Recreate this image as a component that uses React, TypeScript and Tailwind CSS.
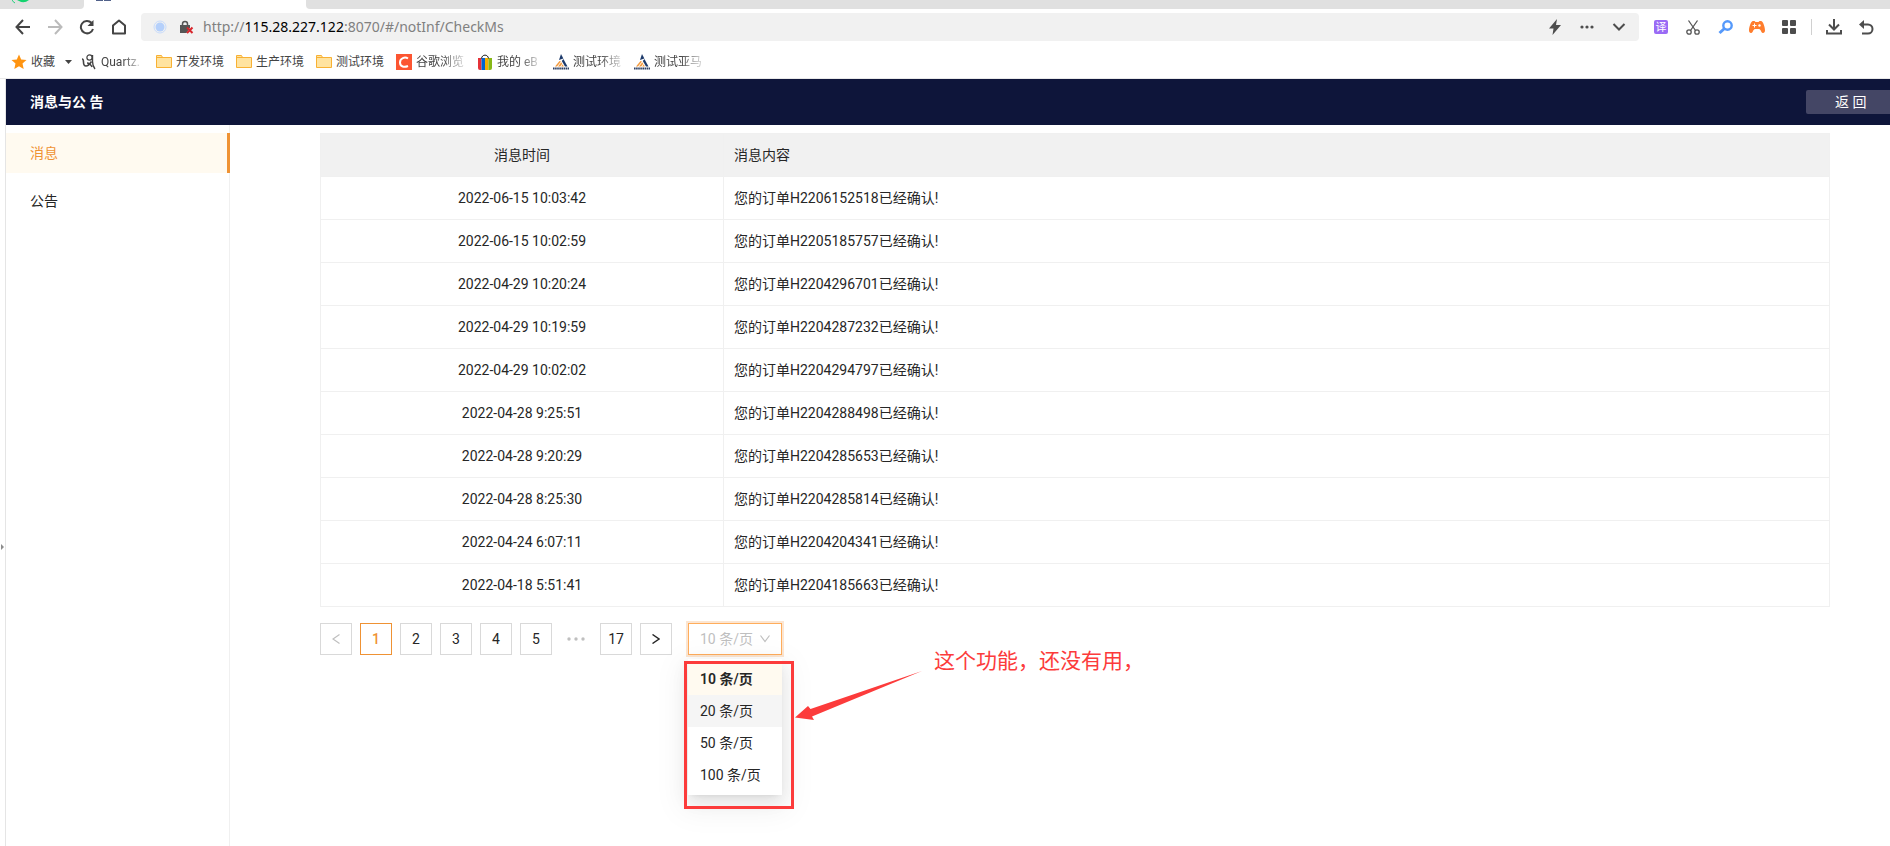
import { useState } from 'react';
import type { ReactNode } from 'react';

type Message = { time: string; order: string };

const messages: Message[] = [
    { time: '2022-06-15 10:03:42', order: 'H2206152518' },
    { time: '2022-06-15 10:02:59', order: 'H2205185757' },
    { time: '2022-04-29 10:20:24', order: 'H2204296701' },
    { time: '2022-04-29 10:19:59', order: 'H2204287232' },
    { time: '2022-04-29 10:02:02', order: 'H2204294797' },
    { time: '2022-04-28 9:25:51', order: 'H2204288498' },
    { time: '2022-04-28 9:20:29', order: 'H2204285653' },
    { time: '2022-04-28 8:25:30', order: 'H2204285814' },
    { time: '2022-04-24 6:07:11', order: 'H2204204341' },
    { time: '2022-04-18 5:51:41', order: 'H2204185663' },
];

const pageSizes = [10, 20, 50, 100];

function FolderIcon() {
    return (
        <svg width="16" height="16" viewBox="0 0 16 16" className="shrink-0">
            <path d="M.5 1.5h5l1 2h9v10H.5z" fill="#ffe3a0" stroke="#f8b133" />
            <path d="M1 3.500h14" stroke="#f8b133" />
        </svg>
    );
}

function NautIcon() {
    return (
        <svg width="16" height="16" viewBox="0 0 16 16" className="shrink-0">
            <path d="M8 0l2.400 4.400L6 6z" fill="#1d3a6b" />
            <path d="M10.400 5L14.500 12.500H12L8.800 7z" fill="#1d3a6b" />
            <path d="M6.500 7L2 12.500h2L8 7.500zM8.300 8.200L5 12.500h2.200l2-2.800zM9.700 10.200L8.200 12.500h2.600z" fill="#f39a3e" />
            <path d="M0 14.500h16" stroke="#2c3f63" strokeWidth="2" strokeDasharray="1.600 .5" />
        </svg>
    );
}

function Bookmark({ icon, label, width, fade }: { icon: ReactNode; label: string; width: string; fade?: boolean }) {
    return (
        <a href="#" className={`flex shrink-0 items-center gap-1 ${width}`}>
            {icon}
            <span className={`whitespace-nowrap ${fade ? '[mask-image:linear-gradient(to_right,black_55%,#0003)]' : ''}`}>
                {label}
            </span>
        </a>
    );
}

function ToolButton({ label, children }: { label: string; children: ReactNode }) {
    return (
        <button type="button" aria-label={label} className="flex h-7 w-8 shrink-0 items-center justify-center">
            {children}
        </button>
    );
}

function BrowserChrome() {
    return (
        <header className="bg-white">
            <div className="flex h-[9px] overflow-hidden">
                <div className="w-[84px] rounded-br bg-[#e0e0e0] pl-3">
                    <svg width="18" height="4" viewBox="0 0 18 4">
                        <path d="M0 0q1 2 3 3" fill="none" stroke="#1fd07a" />
                        <path d="M5 0h12q-5 4-10 1z" fill="#14d36f" />
                    </svg>
                </div>
                <div className="w-[222px] bg-white pl-3">
                    <svg width="18" height="2" viewBox="0 0 18 2">
                        <path d="M0 .5h16" stroke="#51618a" strokeDasharray="7 1" />
                    </svg>
                </div>
                <div className="flex-1 rounded-bl bg-[#e0e0e0]" />
            </div>

            <div className="flex h-9 items-center pl-[7px] pr-2">
                <ToolButton label="后退">
                    <svg width="16" height="16" viewBox="0 0 16 16" fill="none" stroke="#444" strokeWidth="2">
                        <path d="M15 8H2M8 1L1.5 8 8 15" />
                    </svg>
                </ToolButton>
                <ToolButton label="前进">
                    <svg width="16" height="16" viewBox="0 0 16 16" fill="none" stroke="#bbb" strokeWidth="2">
                        <path d="M1 8h13M8 1l6.500 7L8 15" />
                    </svg>
                </ToolButton>
                <ToolButton label="刷新">
                    <svg width="16" height="16" viewBox="0 0 16 16" fill="none" stroke="#444" strokeWidth="2">
                        <path d="M14 10a6.200 6.200 0 1 1-1.500-6.200" />
                        <path d="M14.500 1v6h-6z" fill="#444" stroke="none" />
                    </svg>
                </ToolButton>
                <ToolButton label="主页">
                    <svg width="16" height="16" viewBox="0 0 16 16" fill="none" stroke="#444" strokeWidth="2" strokeLinejoin="round">
                        <path d="M2 14.500V6.500L8 1.500l6 5v8z" />
                    </svg>
                </ToolButton>

                <div className="ml-[6px] flex h-7 flex-1 items-center rounded bg-[#f1f1f1] pl-3 pr-1">
                    <svg width="14" height="14" viewBox="0 0 14 14" className="shrink-0">
                        <circle cx="7" cy="7" r="6" fill="none" stroke="#c9dcfb" />
                        <circle cx="7" cy="7" r="4.500" fill="#b5d0fb" />
                    </svg>
                    <svg width="14" height="14" viewBox="0 0 14 14" className="ml-[13px] shrink-0">
                        <path d="M2.500 6V4a2.500 2.500 0 0 1 5 0v2" fill="none" stroke="#555" strokeWidth="1.500" />
                        <path d="M0 5h10v2.500L6.500 13H0z" fill="#555" />
                        <path d="M7 7.500l5.500 5.500M12.500 7.500L7 13" stroke="#d8262c" strokeWidth="2" />
                    </svg>
                    <span className="ml-[9px] flex-1 font-['Noto_Sans',sans-serif] text-sm text-[#808080]">
                        http://<span className="text-black">115.28.227.122</span>:8070/#/notInf/CheckMs
                    </span>
                    <ToolButton label="极速模式">
                        <svg width="14" height="16" viewBox="0 0 14 16">
                            <path d="M9 0L1 9.500h4.500L4.500 16 13 6H8z" fill="#4d4d4d" />
                        </svg>
                    </ToolButton>
                    <ToolButton label="更多">
                        <svg width="14" height="4" viewBox="0 0 14 4" fill="#4d4d4d">
                            <circle cx="2" cy="2" r="1.600" />
                            <circle cx="7" cy="2" r="1.600" />
                            <circle cx="12" cy="2" r="1.600" />
                        </svg>
                    </ToolButton>
                    <ToolButton label="展开">
                        <svg width="14" height="8" viewBox="0 0 14 8" fill="none" stroke="#4d4d4d" strokeWidth="2">
                            <path d="M1.500 1L7 6.500 12.500 1" />
                        </svg>
                    </ToolButton>
                </div>

                <div className="ml-[6px] flex items-center">
                    <ToolButton label="翻译">
                        <span className="flex size-[14px] items-center justify-center rounded-xs bg-[#9a6bf5] text-[11px] leading-none text-white">
                            译
                        </span>
                    </ToolButton>
                    <ToolButton label="截图">
                        <svg width="14" height="15" viewBox="0 0 14 15" fill="none" stroke="#555">
                            <path d="M2.500 0.500l7 10M11.500 0.500l-7 10" strokeWidth="1.300" />
                            <circle cx="3" cy="12" r="2.200" strokeWidth="1.300" />
                            <circle cx="11" cy="12" r="2.200" strokeWidth="1.300" />
                        </svg>
                    </ToolButton>
                    <ToolButton label="搜索">
                        <svg width="15" height="15" viewBox="0 0 15 15" fill="none" stroke="#5599fb">
                            <circle cx="9.500" cy="5.500" r="4.200" strokeWidth="2.400" />
                            <path d="M6.500 8.500L1.500 13" strokeWidth="3" />
                        </svg>
                    </ToolButton>
                    <ToolButton label="游戏">
                        <svg width="16" height="14" viewBox="0 0 16 14">
                            <path
                                d="M4 1h1.500l1 1h3l1-1H12c2 0 4 6 4 9.500 0 3-3 3.500-4 .5-.7-1.500-1.500-2-2.500-2h-3C5.500 9 4.700 9.500 4 11c-1 3-4 2.500-4-.5C0 7 2 1 4 1z"
                                fill="#ff7d2d"
                            />
                            <path d="M5.500 3.500v4M3.500 5.500h4" stroke="#fff" />
                            <circle cx="10.500" cy="5.500" r="1.200" fill="#fff" />
                        </svg>
                    </ToolButton>
                    <ToolButton label="应用">
                        <svg width="14" height="14" viewBox="0 0 14 14" fill="#4d4d4d">
                            <rect width="6" height="6" rx="1" />
                            <rect x="8" width="6" height="6" rx="1" />
                            <rect y="8" width="6" height="6" rx="1" />
                            <rect x="8" y="8" width="6" height="6" rx="1" />
                        </svg>
                    </ToolButton>
                    <div className="mx-[6px] h-4 w-px bg-[#d0d0d0]" />
                    <ToolButton label="下载">
                        <svg width="16" height="16" viewBox="0 0 16 16" fill="none" stroke="#4d4d4d" strokeWidth="2">
                            <path d="M8 0v10M3 5.500L8 10.500l5-5M1 11v3.500h14V11" />
                        </svg>
                    </ToolButton>
                    <ToolButton label="撤销">
                        <svg width="15" height="15" viewBox="0 0 15 15" fill="none" stroke="#4d4d4d" strokeWidth="2">
                            <path d="M2 4.500h7a4.500 4.500 0 0 1 0 9H3" />
                            <path d="M5 0v9L0 4.500z" fill="#4d4d4d" stroke="none" />
                        </svg>
                    </ToolButton>
                </div>
            </div>

            <nav className="flex h-[34px] items-center overflow-hidden border-b border-[#e8e8e8] pl-[11px] text-xs text-[#444]">
                <a href="#" className="flex w-[70px] shrink-0 items-center gap-1">
                    <svg width="16" height="16" viewBox="0 0 16 16" className="shrink-0">
                        <path d="M8 .5l2.200 5 5.300.500-4 3.600 1.200 5.400L8 12.200 3.300 15l1.200-5.400L.5 6l5.300-.500z" fill="#ff9410" />
                    </svg>
                    收藏
                    <svg width="7" height="4" viewBox="0 0 7 4" className="ml-1.5 shrink-0">
                        <path d="M0 0h7L3.500 4z" fill="#444" />
                    </svg>
                </a>
                <Bookmark
                    width="w-[75px]"
                    label="Quartz."
                    fade
                    icon={
                        <svg width="16" height="16" viewBox="0 0 16 16" fill="none" stroke="#444" className="shrink-0">
                            <path d="M1 5c1 0 1.500 1 1.500 3S3.500 12 5 12s3.500-1.500 5.500-4.500" strokeWidth="1.600" />
                            <circle cx="8.500" cy="3.500" r="2.600" strokeWidth="1.200" />
                            <path d="M11.500 1v6.500c0 3 .5 5 2.500 7.500M6 9c2 0 4 2 5 4" strokeWidth="1.400" />
                        </svg>
                    }
                />
                <Bookmark width="w-20" label="开发环境" icon={<FolderIcon />} />
                <Bookmark width="w-20" label="生产环境" icon={<FolderIcon />} />
                <Bookmark width="w-20" label="测试环境" icon={<FolderIcon />} />
                <Bookmark
                    width="w-[81px]"
                    label="谷歌浏览"
                    fade
                    icon={
                        <svg width="16" height="16" viewBox="0 0 16 16" className="shrink-0">
                            <rect width="16" height="16" fill="#fc5531" />
                            <path d="M12 4.500C9 2.500 4 4 4 8.500s4.500 5 8 3.500" fill="none" stroke="#fff" strokeWidth="2" />
                        </svg>
                    }
                />
                <Bookmark
                    width="w-[76px]"
                    label="我的 eB"
                    fade
                    icon={
                        <svg width="16" height="16" viewBox="0 0 16 16" className="shrink-0">
                            <path d="M1 4h3.500v12H3q-2 0-2-2z" fill="#e53238" />
                            <path d="M4.500 4H8v12H4.500z" fill="#0064d2" />
                            <path d="M8 4h3.500v12H8z" fill="#f5af02" />
                            <path d="M11.500 4H15v10q0 2-2 2h-1.500z" fill="#86b817" />
                            <path d="M4.500 4.500C5 0 11 0 11.500 4.500" fill="none" stroke="#222" />
                        </svg>
                    }
                />
                <Bookmark width="w-[81px]" label="测试环境" fade icon={<NautIcon />} />
                <Bookmark width="w-[81px]" label="测试亚马" fade icon={<NautIcon />} />
            </nav>
        </header>
    );
}

function PageSizeSelect() {
    const [size, setSize] = useState(10);

    return (
        <div className="relative ml-2">
            <select
                aria-label="每页条数"
                value={size}
                onChange={(e) => setSize(Number(e.target.value))}
                className="block h-8 w-[94px] appearance-none border border-[#ffad5c] bg-white pl-[11px] text-sm text-[#bfbfbf] ring-2 ring-[#fce6d2] outline-none"
            >
                {pageSizes.map((n) => (
                    <option key={n} value={n}>
                        {n} 条/页
                    </option>
                ))}
            </select>
            <svg
                width="10"
                height="8"
                viewBox="0 0 10 8"
                fill="none"
                stroke="#bfbfbf"
                className="pointer-events-none absolute right-3 top-3"
            >
                <path d="M.5.5L5 6.500 9.500.500" strokeWidth="1.200" />
            </svg>

            <ul
                role="listbox"
                aria-label="每页条数选项"
                className="absolute left-0 top-9 w-full bg-white py-1 shadow-[0_3px_6px_-4px_rgba(0,0,0,0.12),0_6px_16px_rgba(0,0,0,0.08),0_9px_28px_8px_rgba(0,0,0,0.05)]"
            >
                {pageSizes.map((n) => (
                    <li
                        key={n}
                        role="option"
                        aria-selected={n === size}
                        onClick={() => setSize(n)}
                        className={`h-8 px-3 text-sm leading-8 ${
                            n === size ? 'bg-[#fffaf0] font-semibold' : n === 20 ? 'bg-[#f5f5f5]' : ''
                        }`}
                    >
                        {n} 条/页
                    </li>
                ))}
            </ul>

            {/* 批注 */}
            <div className="pointer-events-none absolute -left-1 top-[38px] h-[148px] w-[110px] border-3 border-[#fc3b3b]" />
            <svg width="128" height="50" viewBox="0 0 128 50" className="pointer-events-none absolute left-[107px] top-[48px]">
                <path d="M0 46.500L13 35l2.500 3L127 0 17 45.500l2 3.500z" fill="#fc3b3b" />
            </svg>
            <p className="absolute left-[246px] top-6 whitespace-nowrap text-[21px] leading-7 text-[#fc3b3b]">这个功能，还没有用，</p>
        </div>
    );
}

function Pagination() {
    const item = 'flex size-8 items-center justify-center border text-sm';

    return (
        <nav className="mt-4 flex gap-2">
            <button type="button" disabled aria-label="上一页" className={`${item} border-[#d9d9d9] text-[#bfbfbf]`}>
                <svg width="8" height="10" viewBox="0 0 8 10" fill="none" stroke="currentColor" strokeWidth="1.200">
                    <path d="M7.500.5L1 5l6.500 4.500" />
                </svg>
            </button>
            <button type="button" className={`${item} border-[#ef9234] font-medium text-[#ef9234]`}>1</button>
            {[2, 3, 4, 5].map((n) => (
                <button key={n} type="button" className={`${item} border-[#d9d9d9]`}>
                    {n}
                </button>
            ))}
            <span className="flex size-8 items-center justify-center">
                <svg width="18" height="4" viewBox="0 0 18 4" fill="#bfbfbf">
                    <circle cx="2" cy="2" r="1.700" />
                    <circle cx="9" cy="2" r="1.700" />
                    <circle cx="16" cy="2" r="1.700" />
                </svg>
            </span>
            <button type="button" className={`${item} border-[#d9d9d9]`}>17</button>
            <button type="button" aria-label="下一页" className={`${item} border-[#d9d9d9]`}>
                <svg width="8" height="10" viewBox="0 0 8 10" fill="none" stroke="currentColor" strokeWidth="1.400">
                    <path d="M.5.5L7 5 .5 9.500" />
                </svg>
            </button>
            <PageSizeSelect />
        </nav>
    );
}

export default function App() {
    return (
        <div className="flex min-h-screen flex-col overflow-hidden bg-white font-[Roboto,'Noto_Sans_CJK_SC',sans-serif] text-[#262626]">
            <BrowserChrome />

            <div className="flex flex-1">
                <div className="w-[6px] shrink-0 border-r border-[#e5e5e5] pt-[465px]">
                    <svg width="4" height="6" viewBox="0 0 4 6" className="ml-px">
                        <path d="M0 0l3 3-3 3z" fill="#8c8c8c" />
                    </svg>
                </div>

                <div className="flex min-w-0 flex-1 flex-col">
                    <div className="flex h-[46px] items-center justify-between bg-[#0e153a] pl-6 text-sm text-white">
                        <h1 className="font-bold">消息与公 告</h1>
                        <button type="button" className="h-6 w-[84px] rounded-l-xs bg-[#444665] pl-[29px] text-left">
                            返 回
                        </button>
                    </div>

                    <div className="flex flex-1">
                        <aside className="flex w-56 shrink-0 flex-col gap-2 border-r border-[#f0f0f0] pt-2 text-sm">
                            <a href="#" className="-mr-px h-10 border-r-3 border-[#ef9234] bg-[#fffaf0] pl-6 leading-10 text-[#ef9234]">
                                消息
                            </a>
                            <a href="#" className="h-10 pl-6 leading-10">公告</a>
                        </aside>

                        <main className="min-w-0 flex-1 pb-8 pl-[90px] pr-[60px] pt-2">
                            <table className="w-full table-fixed border-collapse text-sm">
                                <thead>
                                    <tr className="h-[43px] bg-[#f1f1f1]">
                                        <th className="w-[403px] border border-[#f0f0f0] font-normal">消息时间</th>
                                        <th className="border border-[#f0f0f0] px-[10px] text-left font-normal">消息内容</th>
                                    </tr>
                                </thead>
                                <tbody>
                                    {messages.map((m) => (
                                        <tr key={m.order} className="h-[43px]">
                                            <td className="border border-[#f0f0f0] text-center">{m.time}</td>
                                            <td className="border border-[#f0f0f0] px-[10px]">您的订单{m.order}已经确认!</td>
                                        </tr>
                                    ))}
                                </tbody>
                            </table>
                            <Pagination />
                        </main>
                    </div>
                </div>
            </div>
        </div>
    );
}
